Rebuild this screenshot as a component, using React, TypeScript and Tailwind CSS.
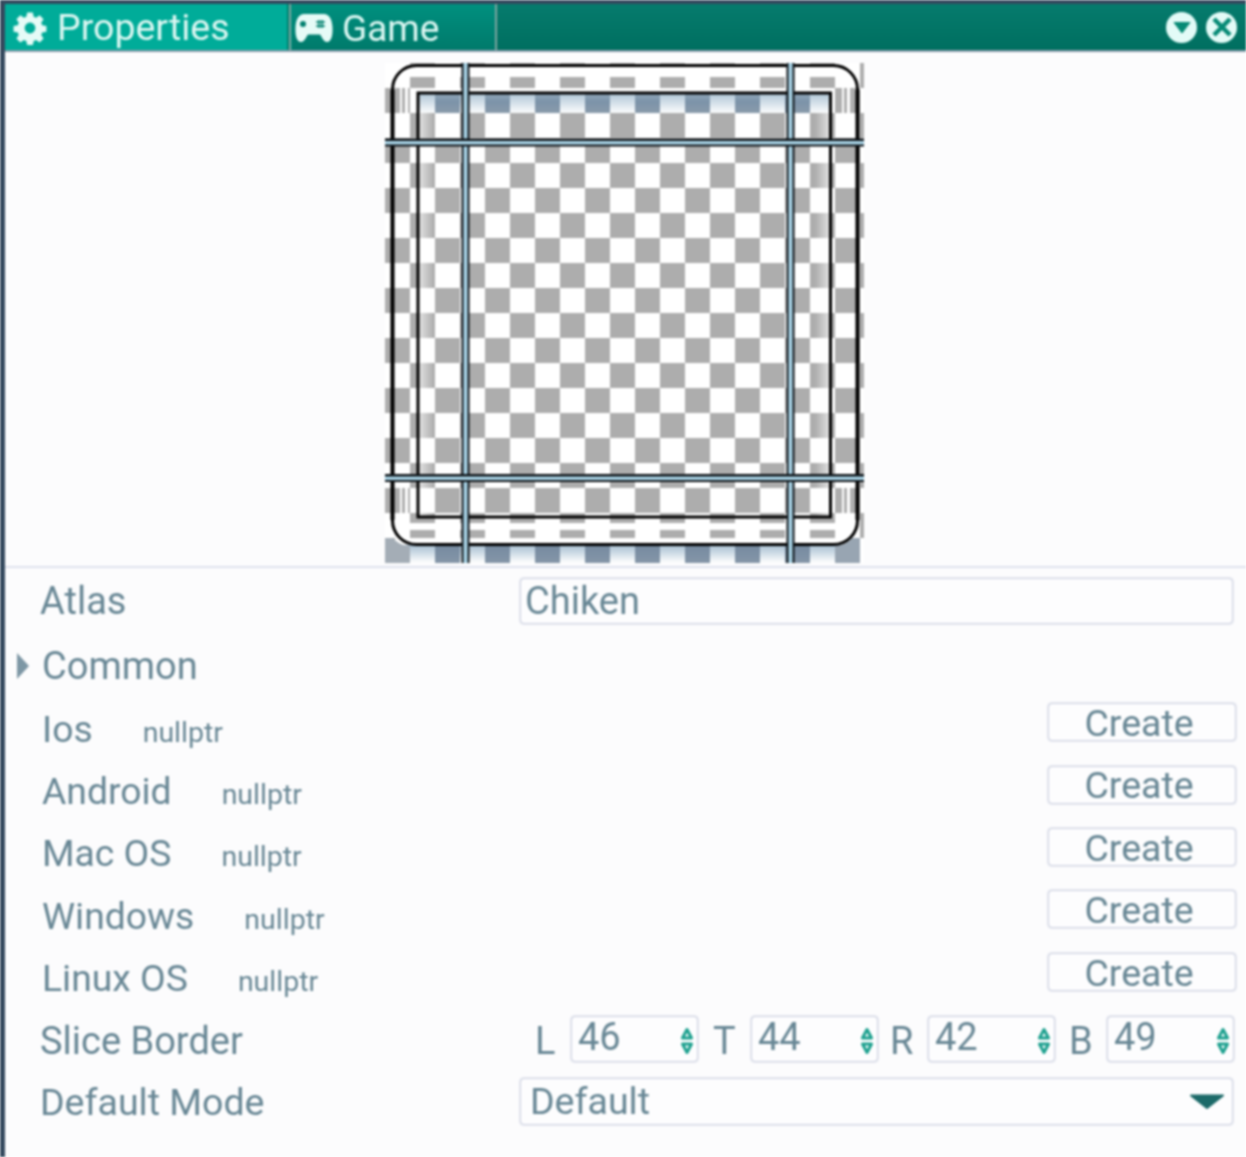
const FONT = "font-['Roboto','Noto_Sans',sans-serif]";

const PLATFORMS = ['Ios', 'Android', 'Mac OS', 'Windows', 'Linux OS'];

const BORDERS = [
  { label: 'L', value: '46', slot: 'w-[36px]' },
  { label: 'T', value: '44', slot: 'ml-[15px] w-[38px]' },
  { label: 'R', value: '42', slot: 'ml-[12px] w-[38px]' },
  { label: 'B', value: '49', slot: 'ml-[14px] w-[38px]' },
];

const FIELD = 'rounded-[4px] border border-[#cfd3e2] bg-[#fdfdfe] shadow-[0_0_2px_#bfc6d8]';

// columns of the checker that are grey on the shaded top and bottom rows
const TOP_CELLS = [435, 485, 535, 585, 635, 685, 735, 785];
const BOTTOM_CELLS = [435, 485, 535, 585, 635, 685, 735, 785];

function GearIcon() {
  return (
    <svg width="34" height="34" viewBox="0 0 24 24" className="shrink-0">
      <path
        fill="#e6fbf7"
        fillRule="evenodd"
        d="M10 1h4l.6 3 1.7.7 2.500-1.700 2.800 2.800-1.700 2.500.7 1.700 3 .6v4l-3 .6-.7 1.700 1.700 2.500-2.800 2.800-2.500-1.700-1.700.7-.6 3h-4l-.6-3-1.700-.7-2.500 1.700-2.800-2.800 1.700-2.500-.7-1.700-3-.6v-4l3-.6.7-1.700L2.400 5.800l2.800-2.800 2.500 1.700 1.700-.7zM12 8.200a3.800 3.800 0 1 0 0 7.600 3.800 3.800 0 0 0 0-7.600z"
      />
    </svg>
  );
}

function GamepadIcon() {
  return (
    <svg width="40" height="30" viewBox="0 0 40 30" className="shrink-0">
      <path
        fill="#e6fbf7"
        d="M10 1h20c5 0 8 5 8.500 13 .4 8-1 15-5.500 15-3.500 0-5-5-7-7.500H14C12 24 10.500 29 7 29 2.500 29 1.100 22 1.500 14 2 6 5 1 10 1z"
      />
      <circle cx="9" cy="11" r="3" fill="#00806f" />
      <path stroke="#00806f" strokeWidth="1.500" d="M22 9h9M22 13h9M25 7v8M28 7v8" />
    </svg>
  );
}

function SpriteGuides() {
  const verticals = [465.5, 790.5];
  const horizontals = [143, 478.5];

  return (
    <svg width="480" height="504" viewBox="385 63 480 504" className="block">
      <defs>
        <pattern id="checker" x="385" y="63" width="50" height="50" patternUnits="userSpaceOnUse">
          <rect x="0" y="0" width="50" height="50" fill="#ffffff" />
          <rect x="25" y="0" width="25" height="25" fill="#adadad" />
          <rect x="0" y="25" width="25" height="25" fill="#adadad" />
        </pattern>
        <linearGradient id="shade-top" x1="0" y1="0" x2="0" y2="1">
          <stop offset="0" stopColor="#a9c1d3" stopOpacity="0.9" />
          <stop offset="1" stopColor="#a9c1d3" stopOpacity="0" />
        </linearGradient>
        <linearGradient id="cell-top" x1="0" y1="0" x2="0" y2="1">
          <stop offset="0" stopColor="#8fa6b9" />
          <stop offset="0.4" stopColor="#7c93a9" />
          <stop offset="1" stopColor="#8a9bab" />
        </linearGradient>
        <linearGradient id="shade-bottom" x1="0" y1="0" x2="0" y2="1">
          <stop offset="0" stopColor="#9db8cd" stopOpacity="0.9" />
          <stop offset="1" stopColor="#9db8cd" stopOpacity="0" />
        </linearGradient>
        <linearGradient id="cell-bottom" x1="0" y1="0" x2="0" y2="1">
          <stop offset="0" stopColor="#758aa0" />
          <stop offset="1" stopColor="#8596a8" />
        </linearGradient>
        <linearGradient id="shade-left" x1="0" y1="0" x2="1" y2="0">
          <stop offset="0" stopColor="#ffffff" stopOpacity="0.65" />
          <stop offset="1" stopColor="#ffffff" stopOpacity="0" />
        </linearGradient>
        <linearGradient id="shade-right" x1="1" y1="0" x2="0" y2="0">
          <stop offset="0" stopColor="#ffffff" stopOpacity="0.65" />
          <stop offset="1" stopColor="#ffffff" stopOpacity="0" />
        </linearGradient>
      </defs>
      <rect x="385" y="63" width="479" height="500" fill="url(#checker)" />

      {/* opaque white strips of the sprite */}
      <path
        fill="#ffffff"
        d="M395 66h460v11H395zM418 88h414v6H418zM395 523h460v7H395zM395 538h460v7H395z"
      />
      <path
        fill="#ffffff"
        d="M400 88h2v25h-2zM405 88h3v25h-3zM400 488h2v25h-2zM405 488h3v25h-3zM842 88h2v25h-2zM847 88h3v25h-3zM842 488h2v25h-2zM847 488h3v25h-3z"
      />

      <rect x="418" y="94" width="414" height="20" fill="url(#shade-top)" />
      {TOP_CELLS.map((x) => (
        <rect key={x} x={x} y="94" width="25" height="19" fill="url(#cell-top)" />
      ))}
      <rect x="419" y="113" width="15" height="405" fill="url(#shade-left)" />
      <rect x="815" y="113" width="15" height="405" fill="url(#shade-right)" />

      <rect x="385" y="545" width="475" height="18" fill="url(#shade-bottom)" />
      {BOTTOM_CELLS.map((x) => (
        <rect key={x} x={x} y="545" width="25" height="18" fill="url(#cell-bottom)" />
      ))}
      <path d="M385 538h8c2 3 9 8 17 8v17h-25z" fill="#a4adb6" />
      <path d="M860 538h-8c-2 3-9 8-17 8v17h25z" fill="#98a5b2" />

      <rect x="392.500" y="65.500" width="465" height="479" rx="24" fill="none" stroke="#000" strokeWidth="3" />
      <path d="M392.500 90v430M857.500 90v430" stroke="#000" strokeWidth="4" />
      <rect x="418" y="93" width="412.500" height="424" fill="none" stroke="#000" strokeWidth="3" />

      {verticals.map((x) => (
        <g key={x}>
          <rect x={x - 4} y="63" width="8" height="500" fill="#0d1216" />
          <rect x={x - 2} y="63" width="4" height="500" fill="#a9d3e6" />
        </g>
      ))}
      {horizontals.map((y) => (
        <g key={y}>
          <rect x="385" y={y - 4.5} width="479" height="8" fill="#0d1216" />
          <rect x="385" y={y - 2} width="479" height="3.500" fill="#a9d3e6" />
        </g>
      ))}
    </svg>
  );
}

function SpinArrows() {
  return (
    <svg width="14" height="30" viewBox="0 0 14 30" className="shrink-0">
      <path d="M7 3.500l4.500 8.500h-9z" fill="none" stroke="#1ea18f" strokeWidth="3" strokeLinejoin="round" />
      <path d="M7 26.500l4.500-8.500h-9z" fill="none" stroke="#1ea18f" strokeWidth="3" strokeLinejoin="round" />
    </svg>
  );
}

export default function App() {
  return (
    <div className={`w-[1246px] h-[1157px] bg-[#fcfcfd] border-t-4 border-t-[#34495e] border-l-[5px] border-l-[#34495e] overflow-hidden blur-[0.8px] ${FONT}`}>
      <div className="h-[48px] flex items-stretch bg-[linear-gradient(#067b6d,#006f60)] border-b-2 border-b-[#8a9cab] text-[#dcf7f2] leading-none">
        <div className="w-[282px] flex items-center gap-[10px] pl-[8px] pt-[2px] bg-[#00ac99] text-[37.5px]">
          <GearIcon />
          Properties
        </div>
        <div className="w-[5px] bg-[linear-gradient(90deg,#00806f_0%,#00806f_50%,#7ea7a1_50%,#7ea7a1_80%,#00907f_80%)]" />
        <div className="w-[203px] flex items-center gap-[8px] pl-[2px] pt-[2px] bg-[linear-gradient(#00907f,#007a6b)] text-[37px]">
          <GamepadIcon />
          Game
        </div>
        <div className="w-[2px] bg-[#7ea7a1]" />
        <div className="flex-1 flex items-center justify-end gap-[9px] pr-[9px]">
          <div className="w-[31px] h-[31px] rounded-full bg-[#e3fbf7] flex items-center justify-center">
            <svg width="18" height="13" viewBox="0 0 18 13">
              <path d="M1 1.500h16L9 12z" fill="#068a75" stroke="#068a75" strokeLinejoin="round" />
            </svg>
          </div>
          <div className="w-[31px] h-[31px] rounded-full bg-[#e3fbf7] flex items-center justify-center">
            <svg width="22" height="22" viewBox="0 0 22 22">
              <path d="M3 3l16 16M19 3L3 19" stroke="#068a75" strokeWidth="4.500" />
            </svg>
          </div>
        </div>
      </div>

      <div className="h-[516px] pl-[380px] pt-[11px] border-b-2 border-b-[#dfe2ee]">
        <SpriteGuides />
      </div>

      <div className="flex flex-col text-[#688795] text-[38px] leading-none">
        <div className="h-[66px] flex items-center pl-[35px] pr-[13px]">
          <span className="w-[480px]">Atlas</span>
          <div className={`flex-1 h-[46px] flex items-center pl-[4px] ${FIELD}`}>Chiken</div>
        </div>

        <div className="h-[64px] flex items-center pl-[11px]">
          <svg width="14" height="28" viewBox="0 0 14 28" className="mr-[12px] shrink-0">
            <path d="M1 1l12 13L1 27z" fill="#7d97a5" />
          </svg>
          <span>Common</span>
        </div>

        {PLATFORMS.map((name) => (
          <div key={name} className="h-[62.4px] flex items-center pl-[37px] pr-[10px]">
            <span className="flex-1 flex items-baseline">
              <span className="text-[37.3px]">{name}</span>
              <span className="ml-[50px] text-[28.5px]">nullptr</span>
            </span>
            <div className={`w-[188px] h-[38px] mb-[14px] pr-[6px] pt-[3px] flex items-center justify-center text-[37.5px] ${FIELD}`}>
              Create
            </div>
          </div>
        ))}

        <div className="h-[62px] flex items-center pl-[35px] pr-[9px]">
          <span className="w-[495px]">Slice Border</span>
          {BORDERS.map((border) => (
            <div key={border.label} className="flex items-center">
              <span className={border.slot}>{border.label}</span>
              <div className={`w-[127px] h-[46px] mb-[4px] flex items-center justify-between pl-[6px] pr-[3px] ${FIELD}`}>
                <span className="mb-[4px]">{border.value}</span>
                <div className="mt-[4px]">
                  <SpinArrows />
                </div>
              </div>
            </div>
          ))}
        </div>

        <div className="h-[62px] flex items-center pl-[35px] pr-[13px]">
          <span className="w-[480px] text-[37.5px]">Default Mode</span>
          <div className={`flex-1 h-[47px] mb-[3px] flex items-center justify-between pl-[9px] pr-[8px] text-[37.5px] ${FIELD}`}>
            Default
            <svg width="34" height="16" viewBox="0 0 34 16">
              <path d="M1 2.500h32L17 15z" fill="#1c6a69" stroke="#1c6a69" strokeWidth="2" strokeLinejoin="round" />
            </svg>
          </div>
        </div>
      </div>
    </div>
  );
}
